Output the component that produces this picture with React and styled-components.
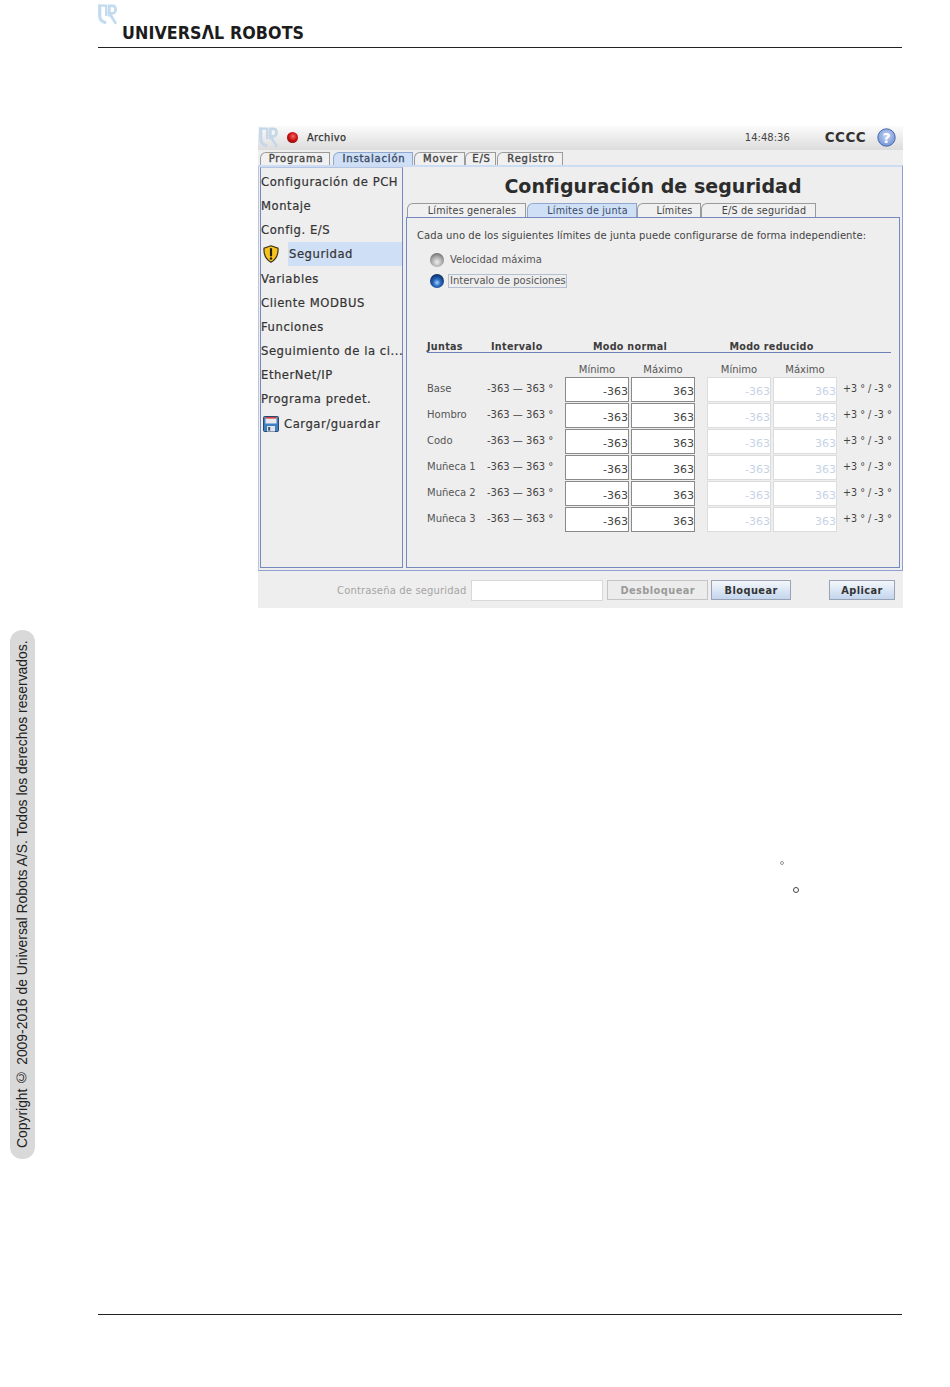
import React from 'react';
import styled, { createGlobalStyle } from 'styled-components';

const Global = createGlobalStyle`
  html, body { margin: 0; padding: 0; background: #fff; }
  * { box-sizing: border-box; }
`

const Page = styled.div`
  position: relative;
  width: 950px;
  height: 1387px;
  padding: 0 48px 0 98px;
  font-family: "DejaVu Sans", sans-serif;
  color: #333;
  overflow: hidden;
`
const DocHeader = styled.header`
  position: relative;
  height: 48px;
  border-bottom: 1px solid #222;
  display: flex;
  align-items: flex-end;
  padding: 0 0 5px 24px;
`
const LogoMark = styled.svg`
  position: absolute;
  left: 0;
  top: 4px;
`
const Wordmark = styled.div`
  font-family: "DejaVu Sans", sans-serif;
  font-weight: 700;
  font-size: 18.5px;
  line-height: 18px;
  letter-spacing: 0.1px;
  color: #1c1c1c;
  white-space: nowrap;
  transform: scaleX(0.86);
  transform-origin: left center;
`
const Shot = styled.section`
  width: 645px;
  margin: 78px 0 0 160px;
  height: 482px;
  background: #eeeeee;
  display: flex;
  flex-direction: column;
`
const TopBar = styled.div`
  height: 24px;
  flex: none;
  background: linear-gradient(#fbfbfb, #dcdcdc);
  display: flex;
  align-items: center;
  padding: 0 7px 2px 1px;
  font-size: 10px;
`
const RedDot = styled.span`
  width: 11px;
  height: 11px;
  border-radius: 50%;
  margin: 0 9px 0 8px;
  background: radial-gradient(circle at 55% 40%, #f26a6a 0, #cc1111 45%, #5c0505 100%);
`
const Archivo = styled.span`
  font-size: 9.8px;
  color: #333;
  letter-spacing: 0.4px;
  -webkit-text-stroke: 0.25px #333;
`
const Clock = styled.span`
  margin-left: auto;
  font-size: 10px;
  color: #444;
`
const Cccc = styled.span`
  margin: 0 11px 0 35px;
  font-weight: 700;
  font-size: 13.5px;
  letter-spacing: 0.4px;
  color: #333;
`
const TabRow = styled.div`
  height: 15px;
  flex: none;
  display: flex;
  align-items: flex-end;
  padding-left: ${p => p.$left}px;
`
const Tab = styled.div`
  width: ${p => p.$w}px;
  margin-left: ${p => p.$gap || 0}px;
  height: ${p => p.$h}px;
  display: flex;
  align-items: center;
  justify-content: center;
  padding: 0 0 ${p => p.$low || 0}px ${p => p.$indent}px;
  font-size: ${p => p.$size}px;
  letter-spacing: ${p => p.$strong ? 0.8 : 0.2}px;
  -webkit-text-stroke: ${p => p.$strong ? '0.35px currentColor' : '0'};
  color: ${p => p.$active ? '#3a4a66' : '#444'};
  background: ${p => p.$active ? '#cfe0f6' : '#f0f0f0'};
  border: 1px solid #9a9a9a;
  border-color: ${p => p.$active ? '#8fa8d0' : '#9a9a9a'};
  border-bottom: none;
  border-top-left-radius: 6px;
  white-space: nowrap;
`
const Main = styled.div`
  height: 406px;
  flex: none;
  display: flex;
  gap: 3px;
  border-top: 2px solid #cbdcf3;
  background: #eee;
  border-left: 1px solid #b9c6e2;
  border-right: 1px solid #8ea0cf;
  border-bottom: 1px solid #8ea0cf;
  padding: 0 2px 2px 1px;
`
const SidePanel = styled.nav`
  width: 143px;
  flex: none;
  border: 1px solid #7688c0;
  border-top-color: #b5c4e2;
  padding: 1.7px 0 0 0;
  display: flex;
  flex-direction: column;
`
const SideItem = styled.div`
  height: 24.2px;
  flex: none;
  display: flex;
  align-items: center;
  font-size: 11.6px;
  letter-spacing: 0.55px;
  -webkit-text-stroke: 0.2px #333;
  color: #333;
  white-space: nowrap;
`
const Selected = styled.span`
  flex: 1;
  align-self: stretch;
  margin-left: 8px;
  padding-left: 1px;
  display: flex;
  align-items: center;
  background: #cfdff6;
`
const IconSlot = styled.span`
  width: 18px;
  height: 18px;
  flex: none;
  margin: 0 ${p => p.$gap || 0}px 0 1px;
  display: flex;
  align-items: center;
  justify-content: center;
`
const RightPanel = styled.div`
  flex: 1;
  display: flex;
  flex-direction: column;
  min-width: 0;
  margin-top: 1px;
`
const Title = styled.h1`
  margin: 0;
  height: 34px;
  flex: none;
  display: flex;
  align-items: center;
  justify-content: center;
  padding-top: 1px;
  font-size: 19px;
  font-weight: 700;
  letter-spacing: 0.05px;
  color: #2c2c2c;
`
const Inner = styled.div`
  flex: 1;
  border: 1px solid #7688c0;
  padding: 0 8px 0 10px;
`
const Description = styled.p`
  margin: 11px 0 0 0;
  height: 14px;
  font-size: 10px;
  line-height: 14px;
  letter-spacing: 0.07px;
  color: #444;
  white-space: nowrap;
`
const Options = styled.div`
  margin: 10px 0 0 13px;
  display: flex;
  flex-direction: column;
  gap: 7px;
`
const Option = styled.div`
  height: 14px;
  display: flex;
  align-items: center;
  gap: 4px;
  font-size: 10px;
  color: #555;
`
const Radio = styled.span`
  width: 14px;
  height: 14px;
  flex: none;
  border-radius: 50%;
  background: ${p => p.$on
    ? 'radial-gradient(circle at 50% 62%, #a8d2fa 0, #2a6cc0 32%, #123d7e 62%, #0a1d3c 100%)'
    : 'radial-gradient(circle at 50% 65%, #eeeeee 0, #adadad 45%, #777 75%, #555 100%)'};
`
const OptionLabel = styled.span`
  padding: 0 0 0 1px;
  width: 119px;
  line-height: 12px;
  border: ${p => p.$focus ? '1px solid #b4bfd0' : '1px solid transparent'};
  white-space: nowrap;
`
const HeadRow = styled.div`
  margin: 53px 0 0 10px;
  width: 464px;
  height: 12px;
  border-bottom: 1px solid #6f7fb8;
  display: flex;
  align-items: flex-start;
  font-size: 9.6px;
  line-height: 11px;
  font-weight: 700;
  letter-spacing: 0.3px;
  color: #3c3c3c;
  white-space: nowrap;
`
const HeadCell = styled.span`
  width: ${p => p.$w}px;
  flex: none;
  text-align: ${p => p.$center ? 'center' : 'left'};
`
const JointRow = styled.div`
  margin: 0 0 1px 10px;
  height: 25px;
  display: flex;
  align-items: center;
  font-size: 10px;
  color: #555;
  white-space: nowrap;
`
const SubRow = styled(JointRow)`
  height: 24px;
  margin-bottom: 0;
  padding-top: 9px;
`
const Name = styled.span`
  width: 60px;
  flex: none;
  margin-top: -2px;
`
const Range = styled.span`
  width: 78px;
  flex: none;
  margin-top: -2px;
  color: #444;
`
const Pair = styled.div`
  display: flex;
  gap: 2px;
  flex: none;
  width: 130px;
  margin-right: ${p => p.$after}px;
`
const Sub = styled.span`
  width: 64px;
  text-align: center;
`
const Field = styled.div`
  width: 64px;
  height: 25px;
  padding-top: 3px;
  display: flex;
  align-items: center;
  justify-content: flex-end;
  font-size: 11px;
  background: #fff;
  color: ${p => p.$off ? '#c6d3e6' : '#444'};
  border: 1px solid ${p => p.$off ? '#dcdcdc' : '#8a8a8a'};
`
const Tolerance = styled.span`
  margin: -2px 0 0 -1px;
  font-size: 9.6px;
  color: #444;
`
const BottomBar = styled.div`
  flex: 1;
  display: flex;
  align-items: center;
  padding: 1px 8px 0 79px;
`
const PassLabel = styled.span`
  font-size: 10px;
  letter-spacing: 0.15px;
  color: #a5a5a5;
  white-space: nowrap;
  margin-right: 4px;
`
const PassInput = styled.div`
  width: 133px;
  height: 21px;
  background: #fff;
  border: 1px solid #d8d8d8;
  margin-right: 4px;
`
const Button = styled.button`
  width: ${p => p.$w}px;
  margin-left: ${p => p.$gap || 0}px;
  height: 20px;
  padding: 0;
  font-family: inherit;
  font-size: 9.8px;
  font-weight: 700;
  letter-spacing: 0.45px;
  color: ${p => p.disabled ? '#9a9a9a' : '#333'};
  background: ${p => p.disabled ? '#ececec' : 'linear-gradient(#f4f7fb, #c3d5ee)'};
  border: 1px solid ${p => p.disabled ? '#c4c4c4' : '#9aa3b5'};
`
const DocFooter = styled.footer`
  margin-top: 706px;
  border-top: 1px solid #222;
`
const Stamp = styled.aside`
  position: absolute;
  left: 10px;
  top: 630px;
  width: 25px;
  height: 529px;
  padding-left: 2px;
  border-radius: 12px;
  background: #d9d9d9;
  display: flex;
  align-items: center;
  justify-content: center;
  writing-mode: vertical-rl;
  transform: rotate(180deg);
  font-family: "Liberation Sans", Arial, sans-serif;
  font-size: 13.9px;
  color: #222;
  white-space: nowrap;
`
const StrayRing = styled.span`
  position: absolute;
  left: ${p => p.$x}px;
  top: ${p => p.$y}px;
  width: ${p => p.$d}px;
  height: ${p => p.$d}px;
  border-radius: 50%;
  border: 1px solid ${p => p.$c};
`

function URLogo({ size, color, ...rest }) {
  return (
    <svg width={size} height={size} viewBox="0 0 20 20" fill="none" stroke={color} {...rest}>
      <path d="M1.7 0.5 V11.5 C1.7 15.5 4.2 18 8.2 18.6" strokeWidth="3.2" />
      <path d="M0.5 1.6 H9 M8.2 1 V12" strokeWidth="2.4" />
      <path d="M11.3 12.5 V1.8 H14.5 C18.6 1.8 18.6 9.4 14.5 9.4 H11.5 L18 19.8" strokeWidth="2.8" />
    </svg>
  )
}

const Shield = () => (
  <svg width="18" height="18" viewBox="0 0 18 18">
    <path d="M9 0.8 L16 3.3 C16.4 9.5 14 14.5 9 17.2 C4 14.5 1.6 9.5 2 3.3 Z" fill="#f6c21c" stroke="#3a3320" strokeWidth="1.2" />
    <path d="M9 4 V10.5" stroke="#222" strokeWidth="2.2" strokeLinecap="round" />
    <circle cx="9" cy="13.5" r="1.2" fill="#222" />
  </svg>
)

const Floppy = () => (
  <svg width="16" height="16" viewBox="0 0 16 16">
    <rect x="0.5" y="0.5" width="15" height="15" rx="1" fill="#3f7fc0" stroke="#27496f" />
    <rect x="2.5" y="1" width="11" height="6.5" fill="#e9e9ee" />
    <rect x="2.5" y="1" width="11" height="1.6" fill="#d0413d" />
    <rect x="4" y="10" width="8" height="5.5" fill="#dfe3ea" />
    <rect x="5.2" y="11" width="2" height="3.6" fill="#3b4f66" />
  </svg>
)

const Help = () => (
  <svg width="19" height="19" viewBox="0 0 19 19">
    <defs>
      <radialGradient id="helpFill" cx="50%" cy="40%" r="65%">
        <stop offset="0" stopColor="#c5d5f5" />
        <stop offset="1" stopColor="#6d8fd6" />
      </radialGradient>
    </defs>
    <circle cx="9.5" cy="9.5" r="8.7" fill="url(#helpFill)" stroke="#4c6aa8" />
    <text x="9.5" y="14.5" textAnchor="middle" fontFamily="DejaVu Sans" fontWeight="700" fontSize="14" fill="#fff">?</text>
  </svg>
)

const mainTabs = [
  { label: 'Programa', w: 70, gap: 0 },
  { label: 'Instalación', w: 80, gap: 3, active: true },
  { label: 'Mover', w: 51, gap: 1 },
  { label: 'E/S', w: 31, gap: 0 },
  { label: 'Registro', w: 66, gap: 1 },
]

const innerTabs = [
  { label: 'Límites generales', w: 119 },
  { label: 'Límites de junta', w: 110, gap: 1, active: true },
  { label: 'Límites', w: 64 },
  { label: 'E/S de seguridad', w: 115 },
]

const joints = ['Base', 'Hombro', 'Codo', 'Muñeca 1', 'Muñeca 2', 'Muñeca 3']

class App extends React.Component {
  render() {
    return (
      <Page>
        <Global />
        <DocHeader>
          <LogoMark as={URLogo} size={20} color="#c3dbee" />
          <Wordmark>UNIVERSΛL ROBOTS</Wordmark>
        </DocHeader>

        <Shot>
          <TopBar>
            <URLogo size={20} color="#c6d8e8" />
            <RedDot />
            <Archivo>Archivo</Archivo>
            <Clock>14:48:36</Clock>
            <Cccc>CCCC</Cccc>
            <Help />
          </TopBar>
          <TabRow $left={2}>
            {mainTabs.map(t => (
              <Tab key={t.label} $w={t.w} $gap={t.gap} $h={13} $size={10} $indent={2} $low={1} $strong $active={t.active}>{t.label}</Tab>
            ))}
          </TabRow>
          <Main>
            <SidePanel>
              <SideItem>Configuración de PCH</SideItem>
              <SideItem>Montaje</SideItem>
              <SideItem>Config. E/S</SideItem>
              <SideItem>
                <IconSlot><Shield /></IconSlot>
                <Selected>Seguridad</Selected>
              </SideItem>
              <SideItem>Variables</SideItem>
              <SideItem>Cliente MODBUS</SideItem>
              <SideItem>Funciones</SideItem>
              <SideItem>Seguimiento de la ci...</SideItem>
              <SideItem>EtherNet/IP</SideItem>
              <SideItem>Programa predet.</SideItem>
              <SideItem>
                <IconSlot $gap={4}><Floppy /></IconSlot>
                Cargar/guardar
              </SideItem>
            </SidePanel>
            <RightPanel>
              <Title>Configuración de seguridad</Title>
              <TabRow $left={1}>
                {innerTabs.map(t => (
                  <Tab key={t.label} $w={t.w} $gap={t.gap} $h={14} $size={9.6} $indent={11} $active={t.active}>{t.label}</Tab>
                ))}
              </TabRow>
              <Inner>
                <Description>Cada uno de los siguientes límites de junta puede configurarse de forma independiente:</Description>
                <Options>
                  <Option><Radio /><OptionLabel>Velocidad máxima</OptionLabel></Option>
                  <Option><Radio $on /><OptionLabel $focus>Intervalo de posiciones</OptionLabel></Option>
                </Options>
                <HeadRow>
                  <HeadCell $w={64}>Juntas</HeadCell>
                  <HeadCell $w={74}>Intervalo</HeadCell>
                  <HeadCell $w={130} $center>Modo normal</HeadCell>
                  <HeadCell $w={153} $center>Modo reducido</HeadCell>
                </HeadRow>
                <SubRow>
                  <Name />
                  <Range />
                  <Pair $after={12}><Sub>Mínimo</Sub><Sub>Máximo</Sub></Pair>
                  <Pair $after={7}><Sub>Mínimo</Sub><Sub>Máximo</Sub></Pair>
                </SubRow>
                {joints.map(j => (
                  <JointRow key={j}>
                    <Name>{j}</Name>
                    <Range>-363 — 363 °</Range>
                    <Pair $after={12}><Field>-363</Field><Field>363</Field></Pair>
                    <Pair $after={7}><Field $off>-363</Field><Field $off>363</Field></Pair>
                    <Tolerance>+3 ° / -3 °</Tolerance>
                  </JointRow>
                ))}
              </Inner>
            </RightPanel>
          </Main>
          <BottomBar>
            <PassLabel>Contraseña de seguridad</PassLabel>
            <PassInput />
            <Button disabled $w={101}>Desbloquear</Button>
            <Button $w={80} $gap={3}>Bloquear</Button>
            <Button $w={66} $gap={38}>Aplicar</Button>
          </BottomBar>
        </Shot>

        <DocFooter />
        <Stamp>Copyright © 2009-2016 de Universal Robots A/S. Todos los derechos reservados.</Stamp>
        <StrayRing $x={780} $y={861} $d={4} $c="#999" />
        <StrayRing $x={793} $y={887} $d={6} $c="#444" />
      </Page>
    )
  }
}

export default App;
